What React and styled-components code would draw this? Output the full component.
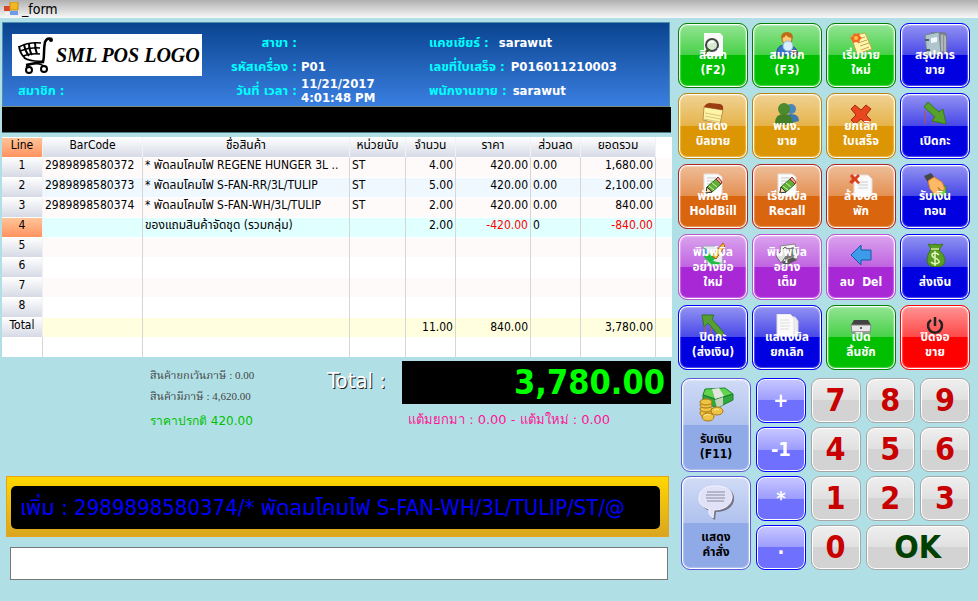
import React from "react";
import styled, { createGlobalStyle, css } from "styled-components";

const GlobalStyle = createGlobalStyle`
  *, *::before, *::after { box-sizing: border-box; }
  body {
    margin: 0;
    background: #b0e0e6;
    color: #000;
    font: 12px/16px "DejaVu Sans Condensed", "Noto Sans Thai", "DejaVu Sans", sans-serif;
  }
  button, input { font: inherit; margin: 0; }
`;

const TitleBar = styled.header`
  display: flex;
  align-items: center;
  gap: 3px;
  height: 18px;
  padding-left: 4px;
  background: linear-gradient(#b0b0b0, #f8f8f8);
  font-size: 14px;
`;

const Screen = styled.main`
  display: flex;
  align-items: flex-start;
  gap: 6px;
  padding: 4px 8px 8px 2px;
`;

const SalePane = styled.section`
  flex: 1;
  min-width: 0;
`;

const Info = styled.section`
  display: grid;
  grid-template-columns: 200px 81px 124px 1fr;
  grid-template-rows: repeat(3, 24px);
  align-items: center;
  column-gap: 4px;
  margin-right: 2px;
  padding: 8px 0 3px 9px;
  border: 1px solid #4f8fae;
  border-bottom-color: #7d8f7a;
  background: linear-gradient(#0a4490, #3a7fe0);
  color: #fff;
  font-size: 13px;
  font-weight: bold;
  line-height: 14px;
`;

const Logo = styled.div`
  grid-row: span 2;
  display: flex;
  align-items: center;
  gap: 2px;
  width: 190px;
  height: 42px;
  padding-left: 6px;
  background: #fff;
  color: #000;
  font: italic bold 20px/24px "Liberation Serif", serif;
  white-space: nowrap;
`;

const Label = styled.span`
  color: #00ffff;
  text-align: ${(p) => p.$align || "left"};
  white-space: nowrap;
`;

const Pair = styled.div`
  display: flex;
  gap: 6px;
  white-space: nowrap;
`;

const Member = styled.div`
  padding-left: 6px;
`;

const BlackBar = styled.div`
  height: 26px;
  margin-right: 1px;
  background: #000;
  border-bottom: 1px solid #4a7f86;
`;

const Items = styled.table`
  width: 100%;
  margin-top: 4px;
  table-layout: fixed;
  border-collapse: separate;
  border-spacing: 0;
  background: #fff;
  line-height: 16px;

  td, th {
    height: 20px;
    padding: 0 2px 4px;
    overflow: hidden;
    white-space: nowrap;
    font-weight: normal;
    box-shadow: inset 0 1px #fff;
  }
  tfoot td { padding-bottom: 0; }
`;

const HeadCell = styled.th`
  background: linear-gradient(#ffffff, #d6dae5);
  border-right: 1px solid #f2f2f4;
  text-align: center;
  ${(p) => p.$active && css`background: linear-gradient(#ffc79c, #ff935f);`}
`;

const Row = styled.tr`
  background: ${(p) => p.$tone};
`;

const Cell = styled.td`
  border-right: ${(p) => (p.$last ? "0" : "1px solid #d6d6d6")};
  text-align: ${(p) => p.$align || "left"};
  color: ${(p) => (p.$negative ? "#ff0000" : "#000")};
  text-overflow: ellipsis;
`;

const Summary = styled.section`
  display: grid;
  grid-template-columns: 1fr 269px;
  height: 119px;
  padding: 4px 1px 0 148px;
`;

const Taxes = styled.div`
  display: flex;
  justify-content: space-between;
  padding-right: 16px;
`;

const TaxLines = styled.div`
  padding-top: 4px;
  color: #444;
  font: 11px/21px "Liberation Serif", "Noto Serif Thai", serif;
`;

const RegularPrice = styled.p`
  margin: 2px 0 0;
  color: #00c000;
  font: 12px/24px "DejaVu Sans", sans-serif;
`;

const TotalLabel = styled.div`
  padding-top: 7px;
  color: #fff;
  font-size: 22px;
  line-height: 26px;
  text-shadow: 1px 1px #222;
`;

const TotalBox = styled.output`
  display: block;
  height: 43px;
  padding-right: 6px;
  background: #000;
  color: #00ff00;
  font-size: 34px;
  font-weight: bold;
  line-height: 42px;
  text-align: right;
`;

const Points = styled.p`
  margin: 5px 0 0 6px;
  color: #ff1493;
  font: 13px/22px "DejaVu Sans", sans-serif;
`;

const MessageFrame = styled.div`
  margin: 0 3px 0 4px;
  padding: 9px 8px 7px 4px;
  border: 1px solid #e8a317;
  background: linear-gradient(#ffd700, #daa520);
`;

const Message = styled.div`
  height: 43px;
  padding: 0 9px;
  border-radius: 5px;
  background: #000;
  color: #0000ff;
  font-size: 22px;
  line-height: 43px;
  white-space: nowrap;
  overflow: hidden;
`;

const CommandInput = styled.input`
  display: block;
  width: calc(100% - 12px);
  height: 33px;
  margin: 10px 0 0 8px;
  padding: 0 6px;
  border: 1px solid #777;
  background: #fff;
  font-size: 18px;
`;

const Controls = styled.aside`
  width: 292px;
  flex: none;
`;

const Actions = styled.div`
  display: grid;
  grid-template-columns: repeat(4, 1fr);
  grid-template-rows: repeat(5, 1fr);
  gap: 5px 4px;
  height: 347px;
  margin-top: 1px;
`;

const tones = {
  green: ["#00bf00", "#008000", "#fff"],
  amber: ["#dc9604", "#b8860b", "#fff"],
  orange: ["#d9650f", "#b22222", "#fff"],
  blue: ["#0000e0", "#0000ff", "#fff"],
  violet: ["#a828d6", "#ba55d3", "#fff"],
  red: ["#ff0000", "#ff0000", "#fff"],
  soft: ["#90aae8", "#5b5bd6", "#000"],
  indigo: ["#7070ff", "#0000ff", "#fff"],
};

const ActionButton = styled.button`
  position: relative;
  display: flex;
  flex-direction: column;
  justify-content: flex-end;
  align-items: center;
  min-width: 0;
  padding: 0 0 9px;
  border: 1px solid ${(p) => tones[p.$tone][1]};
  border-radius: 9px;
  background:
    linear-gradient(rgba(255, 255, 255, 0.58), rgba(255, 255, 255, 0.28) 50%, transparent 50%)
    ${(p) => tones[p.$tone][0]};
  box-shadow: inset 0 0 0 1px #fff, inset 0 0 1px 2px rgba(255, 255, 255, 0.3);
  color: ${(p) => tones[p.$tone][2]};
  font-size: 12px;
  font-weight: bold;
  line-height: 15px;
  ${(p) => p.$tall && css`grid-row: span 2;`}
`;

const ButtonIcon = styled.svg`
  position: absolute;
  top: ${(p) => (p.$large ? "7px" : "8px")};
  left: 50%;
  translate: -50% 0;
  width: ${(p) => (p.$large ? "36px" : "24px")};
  height: ${(p) => (p.$large ? "36px" : "24px")};
`;

const Caption = styled.span`
  position: relative;
  white-space: pre;
`;

const Keypad = styled.div`
  display: grid;
  grid-template-columns: 70px repeat(4, 1fr);
  grid-template-rows: repeat(4, 45px);
  gap: 4px 5px;
  margin: 8px 0 0 3px;
`;

const Key = styled.button`
  padding: 0 0 2px;
  border: 1px solid #a6a6a6;
  border-radius: 9px;
  background: linear-gradient(#efefef, #e0e0e0 50%, #d3d3d3 50%);
  box-shadow: inset 0 0 0 1px #fff;
  color: ${(p) => (p.$ok ? "#004000" : "#c80000")};
  font-size: 32px;
  font-weight: bold;
  line-height: 40px;
  ${(p) => p.$ok && css`grid-column: span 2;`}
`;

const OperatorKey = styled(Key)`
  border-color: #0000ff;
  background: linear-gradient(#c8c8ff, #9c9cff 50%, #7070ff 50%);
  color: #fff;
  font-size: 20px;
`;

const pencilSheet = (
  <>
    <path d="M3 1h14l4 3v17l-3 2H3z" fill="#fbfbfb" stroke="#e2e2e2" />
    <path d="M6 5h9M6 8h6M6 11h4" stroke="#c9c9c9" />
    <path d="M5 20l1-6 9-8 5 5-9 8z" fill="#5fae35" stroke="#2d6e1c" />
    <path d="M15 6l2-2 4 5-1 2z" fill="#f0a7a0" stroke="#8c2f20" />
    <path d="M5 20l1-6 5 5z" fill="#f5d9a0" stroke="#333" />
    <path d="M8 13l5 4M11 10l5 4" stroke="#d2f0a8" />
  </>
);

const icons = {
  search: (
    <>
      <path d="M3 1h16l3 3v20H3z" fill="#fafafa" />
      <circle cx="11" cy="13" r="6" fill="#d5ead0" stroke="#404840" strokeWidth="2" />
      <path d="M8 12q1-3 5-2" stroke="#fff" strokeWidth="2" fill="none" />
      <path d="M7 18l-5 5" stroke="#2f5f1c" strokeWidth="3" strokeLinecap="round" />
    </>
  ),
  member: (
    <>
      <path d="M1 23q1-9 7-10h7q7 2 8 10z" fill="#3672c8" stroke="#204f94" />
      <path d="M8 13l4 6 3-6z" fill="#fff" />
      <circle cx="12" cy="7" r="5" fill="#ffc878" stroke="#a86218" />
      <path d="M6 6q0-6 6-6 6 0 6 6-5 0-7-3-1 3-5 3" fill="#bd6c15" />
      <circle cx="13" cy="14" r="5" fill="#d8efff" stroke="#93b8d8" />
      <path d="M17 18l5 5" stroke="#973b20" strokeWidth="3" />
    </>
  ),
  note: (
    <>
      <path d="M2 4l14-3 7 16-15 5z" fill="#fff6b0" stroke="#c8a64c" />
      <path d="M9 7l7-2M9 11l9-3M11 14l9-3M12 18l8-3" stroke="#c8a64c" />
      <path d="M5 1l2 1 3-1 1 3 2 2-2 2-1 3-3-1-3 1-1-3-2-2 3-2z" fill="#f26a21" />
      <circle cx="7" cy="6" r="2" fill="#ffc247" />
    </>
  ),
  binder: (
    <>
      <path d="M8 1h14l2 3v16H10z" fill="#8c9296" stroke="#666d73" />
      <path d="M19 3v17M22 4v16" stroke="#d2d7da" />
      <path d="M2 3l14-3 2 21-14 3z" fill="#b0c4ce" stroke="#71838e" />
      <path d="M8 6l6-1v5l-6 1z" fill="#f0f6fa" />
      <path d="M2 8h4M3 18h4" stroke="#4b5c66" strokeWidth="2" />
    </>
  ),
  memo: (
    <>
      <path d="M3 5l19 3-3 14-17-4z" fill="#fff5a6" stroke="#b7924c" />
      <path d="M3 5q2-4 6-4l10 1q4 1 3 6z" fill="#9a3d12" />
      <path d="M4 11l16 3M4 14l15 3M3 17l16 3" stroke="#dcc078" />
    </>
  ),
  people: (
    <>
      <circle cx="16" cy="7" r="5" fill="#4a86b8" />
      <path d="M8 21q1-9 8-9 8 0 8 7l-7 2z" fill="#3e78ae" />
      <circle cx="9" cy="7" r="6" fill="#4b8a2d" />
      <path d="M0 21q0-9 9-9 8 0 9 9-9 4-18 0" fill="#447e26" />
    </>
  ),
  cross: (
    <path d="M6 3l6 5 5-5 5 4-5 6 5 5-5 4-5-5-6 5-4-4 5-5-5-6z" fill="#e8461e" stroke="#a82c10" />
  ),
  arrowDown: (
    <>
      <path d="M2 8v14M10 15v7" stroke="#c45238" strokeWidth="1" />
      <path d="M5 0l11 10 4-3 3 15-14-3 3-4L1 5z" fill="#56a02c" stroke="#34791c" />
    </>
  ),
  arrowUp: (
    <>
      <path d="M4 10v13M10 12v11M16 17v6" stroke="#c4602c" strokeWidth="1" />
      <path d="M1 1l12 0-2 4 12 14-4 4L7 9l-4 4z" fill="#579e35" stroke="#34791c" />
    </>
  ),
  pencil: pencilSheet,
  removeSheet: (
    <>
      <path d="M5 2h14l4 4v16l-3 2H5z" fill="#fafafa" stroke="#ddd" />
      <path d="M9 9h10M9 12h10M9 15h10" stroke="#ccc" />
      <path d="M3 1l3 3 3-3 2 2-3 3 3 4-2 1-3-3-3 3-3-2 3-3-2-3z" fill="#d8421c" />
    </>
  ),
  hand: (
    <>
      <path d="M11 13h12v9H9z" fill="#5cd24a" stroke="#218a28" />
      <path d="M1 3l7-3 4 5-7 5z" fill="#474747" />
      <path d="M5 8l6-4 8 5 3 7-3 2-4-4 2 6-5 2-5-6z" fill="#ffb866" stroke="#d47d2b" />
    </>
  ),
  paint: (
    <>
      <path d="M2 3h12l8 7-1 12H7z" fill="#e9e9f2" stroke="#9da6b3" />
      <path d="M3 5q4 0 6 7l10-7q4 0 0 5l-7 8 9 2-9 3-9-9z" fill="#21bd42" />
      <path d="M11 13L22 0l2 3-9 13z" fill="#f2be39" stroke="#a85a1d" />
      <circle cx="4" cy="9" r="3" fill="#4d9af0" />
    </>
  ),
  photo: (
    <>
      <path d="M5 3l15-2 3 14-14 6z" fill="#f2f2f2" stroke="#858585" />
      <path d="M7 6l12-2 1 9-10 4z" fill="#777" />
      <path d="M1 13l9-9 5 4-9 12z" fill="#dedede" stroke="#666" />
      <path d="M7 19l11-5 4 3-12 6z" fill="#555" />
    </>
  ),
  arrowLeft: (
    <path d="M2 12L12 2v5h10v10H12v5z" fill="#3d9be9" stroke="#155aa8" />
  ),
  moneyBag: (
    <>
      <path d="M8 6L5 1l4 1 3-1 3 1 5-1-4 6q6 5 6 10 0 7-9 7t-9-7q0-6 4-11" fill="#599e24" stroke="#3c7817" />
      <path d="M8 6h8" stroke="#d3e897" strokeWidth="1.5" />
      <path d="M16 12q-2-2-4-2-3 0-3 2t3 3 4 3-4 3q-2 0-4-2M12 8v15" fill="none" stroke="#e7f5be" strokeWidth="1.5" />
    </>
  ),
  sheets: (
    <>
      <path d="M8 3h12l3 4v15H9z" fill="#eee" stroke="#d6d6d6" />
      <path d="M2 0h13l4 4v16l-3 2H2z" fill="#fbfbfb" stroke="#ddd" />
      <path d="M5 6h9M5 9h10M5 12h10M5 15h9" stroke="#ddd" />
    </>
  ),
  drawer: (
    <>
      <path d="M5 6h14l3 5H2z" fill="#434343" />
      <path d="M2 11h20l-1 8H3z" fill="#e7e7e7" stroke="#858585" />
      <path d="M3 18h18" stroke="#999" strokeWidth="2" />
      <circle cx="12" cy="14" r="1" fill="#333" />
    </>
  ),
  power: (
    <path d="M8 6a7 7 0 1 0 8 0M12 3v9" fill="none" stroke="#222" strokeWidth="2.5" />
  ),
  money: (
    <>
      <path d="M7 3l20-1 8 6-17 5L5 9z" fill="#61d34e" stroke="#198629" />
      <path d="M14 3l7-1 5 8-9 3z" fill="#e2e5df" />
      <path d="M5 9l13 5 17-6v6l-16 8L5 16z" fill="#30a93c" stroke="#1b7d2a" />
      <path d="M17 14l8-3v8l-6 3z" fill="#c5d2c0" />
      <g fill="#efc344" stroke="#aa7712">
        <ellipse cx="8" cy="27" rx="6" ry="4" />
        <ellipse cx="8" cy="23" rx="6" ry="3" />
        <ellipse cx="8" cy="19" rx="6" ry="3" />
        <ellipse cx="8" cy="16" rx="6" ry="3" />
        <ellipse cx="19" cy="25" rx="6" ry="4" />
        <ellipse cx="10" cy="31" rx="6" ry="4" />
      </g>
      <path d="M6 30q3-3 6-1M16 24q3-2 5 0" stroke="#fff0a2" fill="none" />
    </>
  ),
  speech: (
    <>
      <path d="M19 3c13 0 18 6 17 13-1 8-9 12-18 12l-1 8q-6-3-5-9C6 25 3 21 3 16 3 7 9 3 19 3z" fill="#747488" />
      <path d="M17 2c13 0 18 6 17 12-1 8-9 12-18 12l-1 8q-5-3-4-9C5 23 1 20 1 15 1 6 7 2 17 2z" fill="#e1e1f7" stroke="#f5f5ff" />
      <path d="M9 8h18M8 11h19M8 14h19M9 17h17" stroke="#8b8b9e" />
    </>
  ),
};

const actions = [
  ["green", "search", "สินค้า\n(F2)"],
  ["green", "member", "สมาชิก\n(F3)"],
  ["green", "note", "เริ่มขาย\nใหม่"],
  ["blue", "binder", "สรุปการ\nขาย"],
  ["amber", "memo", "แสดง\nบิลขาย"],
  ["amber", "people", "พนง.\nขาย"],
  ["amber", "cross", "ยกเลิก\nใบเสร็จ"],
  ["blue", "arrowDown", "เปิดกะ"],
  ["orange", "pencil", "พักบิล\nHoldBill"],
  ["orange", "pencil", "เรียกบิล\nRecall"],
  ["orange", "removeSheet", "ล้างบิล\nพัก"],
  ["blue", "hand", "รับเงิน\nทอน"],
  ["violet", "paint", "พิมพ์บิล\nอย่างย่อ\nใหม่"],
  ["violet", "photo", "พิมพ์บิล\nอย่าง\nเต็ม"],
  ["violet", "arrowLeft", "ลบ  Del"],
  ["blue", "moneyBag", "ส่งเงิน"],
  ["blue", "arrowUp", "ปิดกะ\n(ส่งเงิน)"],
  ["blue", "sheets", "แสดงบิล\nยกเลิก"],
  ["green", "drawer", "เปิด\nลิ้นชัก"],
  ["red", "power", "ปิดจอ\nขาย"],
];

const columns = ["BarCode", "ชื่อสินค้า", "หน่วยนับ", "จำนวน", "ราคา", "ส่วนลด", "ยอดรวม"];
const widths = [41, 100, 207, 56, 50, 75, 50, 75];
const aligns = ["left", "left", "left", "right", "right", "left", "right"];
const blank = ["", "", "", "", "", "", ""];
const rows = [
  ["#fffafa", ["2989898580372", "* พัดลมโคมไฟ REGENE HUNGER 3L ..", "ST", "4.00", "420.00", "0.00", "1,680.00"]],
  ["#f0f8ff", ["2989898580373", "* พัดลมโคมไฟ S-FAN-RR/3L/TULIP", "ST", "5.00", "420.00", "0.00", "2,100.00"]],
  ["#fffafa", ["2989898580374", "* พัดลมโคมไฟ S-FAN-WH/3L/TULIP", "ST", "2.00", "420.00", "0.00", "840.00"]],
  ["#e0ffff", ["", "ของแถมสินค้าจัดชุด (รวมกลุ่ม)", "", "2.00", "-420.00", "0", "-840.00"]],
  ["#fffafa", blank],
  ["#ffffff", blank],
  ["#fffafa", blank],
  ["#ffffff", blank],
];
const totals = ["", "", "", "11.00", "840.00", "", "3,780.00"];

function Cells({ values }) {
  return (
    <>
      {values.map((v, i) => (
        <Cell key={i} $align={aligns[i]} $negative={v.startsWith("-")}>{v}</Cell>
      ))}
      <Cell $last />
    </>
  );
}

function Action({ tone, icon, text, tall }) {
  const size = tall ? 36 : 24;
  return (
    <ActionButton type="button" $tone={tone} $tall={tall}>
      <ButtonIcon $large={tall} viewBox={`0 0 ${size} ${size}`} fill="none" aria-hidden="true">
        {icons[icon]}
      </ButtonIcon>
      <Caption>{text}</Caption>
    </ActionButton>
  );
}

const Cart = styled.svg`
  flex: none;
`;

function CartLogo() {
  return (
    <Cart width="36" height="38" viewBox="0 0 36 38" fill="none" stroke="#000" aria-hidden="true">
      <path d="M34 3q-5-2-7 3-1 5-1 11 0 6-1 9-8 1-17 3" strokeWidth="2.5" />
      <circle cx="33" cy="4" r="2" fill="#000" stroke="none" />
      <path d="M1 11q9-5 22-4M2 15q10-4 20-3M5 20q8-3 17-2" strokeWidth="1.5" />
      <path d="M1 10q1 8 6 12M6 8q1 7 5 12M11 7q0 7 3 12M17 6q0 7 2 12" strokeWidth="2" />
      <path d="M6 22q8 4 19 3" strokeWidth="1.5" />
      <path d="M8 31q8-7 20 0" strokeWidth="1.5" />
      <circle cx="11" cy="34" r="3" strokeWidth="2" />
      <circle cx="26" cy="33" r="3" strokeWidth="2" />
    </Cart>
  );
}

function FormIcon() {
  return (
    <svg width="15" height="14" viewBox="0 0 15 14" aria-hidden="true">
      <path d="M0 4h6v5H0z" fill="#d8442c" />
      <path d="M6 0h8v8H6z" fill="#f2b824" stroke="#c78d14" />
      <path d="M6 9h8v4H6z" fill="#6d9ceb" />
      <path d="M1 10h4v3H1z" fill="#f2f2f2" />
    </svg>
  );
}

export default function App() {
  return (
    <>
      <GlobalStyle />
      <TitleBar><FormIcon />_form</TitleBar>
      <Screen>
        <SalePane>
          <Info>
            <Logo><CartLogo />SML POS LOGO</Logo>
            <Label $align="right">สาขา :</Label>
            <span />
            <Pair><Label>แคชเชียร์ :</Label><span>&nbsp;sarawut</span></Pair>
            <Label $align="right">รหัสเครื่อง :</Label>
            <span>P01</span>
            <Pair><Label>เลขที่ใบเสร็จ :</Label><span>P016011210003</span></Pair>
            <Member><Label>สมาชิก :</Label></Member>
            <Label $align="right">วันที่ เวลา :</Label>
            <span>11/21/2017<br />4:01:48 PM</span>
            <Pair><Label>พนักงานขาย :</Label><span>sarawut</span></Pair>
          </Info>
          <BlackBar />
          <Items>
            <colgroup>
              {widths.map((w, i) => <col key={i} width={w} />)}
              <col />
            </colgroup>
            <thead>
              <tr>
                <HeadCell $active scope="col">Line</HeadCell>
                {columns.map((c) => <HeadCell key={c} scope="col">{c}</HeadCell>)}
                <td />
              </tr>
            </thead>
            <tbody>
              {rows.map(([tone, values], i) => (
                <Row key={i} $tone={tone}>
                  <HeadCell scope="row" $active={i === 3}>{i + 1}</HeadCell>
                  <Cells values={values} />
                </Row>
              ))}
            </tbody>
            <tfoot>
              <Row $tone="#ffffe0">
                <HeadCell scope="row">Total</HeadCell>
                <Cells values={totals} />
              </Row>
              <Row $tone="#ffffff">
                <Cell />
                <Cells values={blank} />
              </Row>
            </tfoot>
          </Items>
          <Summary>
            <Taxes>
              <div>
                <TaxLines>
                  <div>สินค้ายกเว้นภาษี : 0.00</div>
                  <div>สินค้ามีภาษี : 4,620.00</div>
                </TaxLines>
                <RegularPrice>ราคาปรกติ 420.00</RegularPrice>
              </div>
              <TotalLabel>Total :</TotalLabel>
            </Taxes>
            <div>
              <TotalBox>3,780.00</TotalBox>
              <Points>แต้มยกมา : 0.00 - แต้มใหม่ : 0.00</Points>
            </div>
          </Summary>
          <MessageFrame>
            <Message>เพิ่ม : 2989898580374/* พัดลมโคมไฟ S-FAN-WH/3L/TULIP/ST/@</Message>
          </MessageFrame>
          <CommandInput type="text" aria-label="คำสั่ง" />
        </SalePane>
        <Controls>
          <Actions>
            {actions.map(([tone, icon, text]) => (
              <Action key={text} tone={tone} icon={icon} text={text} />
            ))}
          </Actions>
          <Keypad>
            <Action tall tone="soft" icon="money" text={"รับเงิน\n(F11)"} />
            <OperatorKey type="button">+</OperatorKey>
            <Key type="button">7</Key>
            <Key type="button">8</Key>
            <Key type="button">9</Key>
            <OperatorKey type="button">-1</OperatorKey>
            <Key type="button">4</Key>
            <Key type="button">5</Key>
            <Key type="button">6</Key>
            <Action tall tone="soft" icon="speech" text={"แสดง\nคำสั่ง"} />
            <OperatorKey type="button">*</OperatorKey>
            <Key type="button">1</Key>
            <Key type="button">2</Key>
            <Key type="button">3</Key>
            <OperatorKey type="button">.</OperatorKey>
            <Key type="button">0</Key>
            <Key type="button" $ok>OK</Key>
          </Keypad>
        </Controls>
      </Screen>
    </>
  );
}
